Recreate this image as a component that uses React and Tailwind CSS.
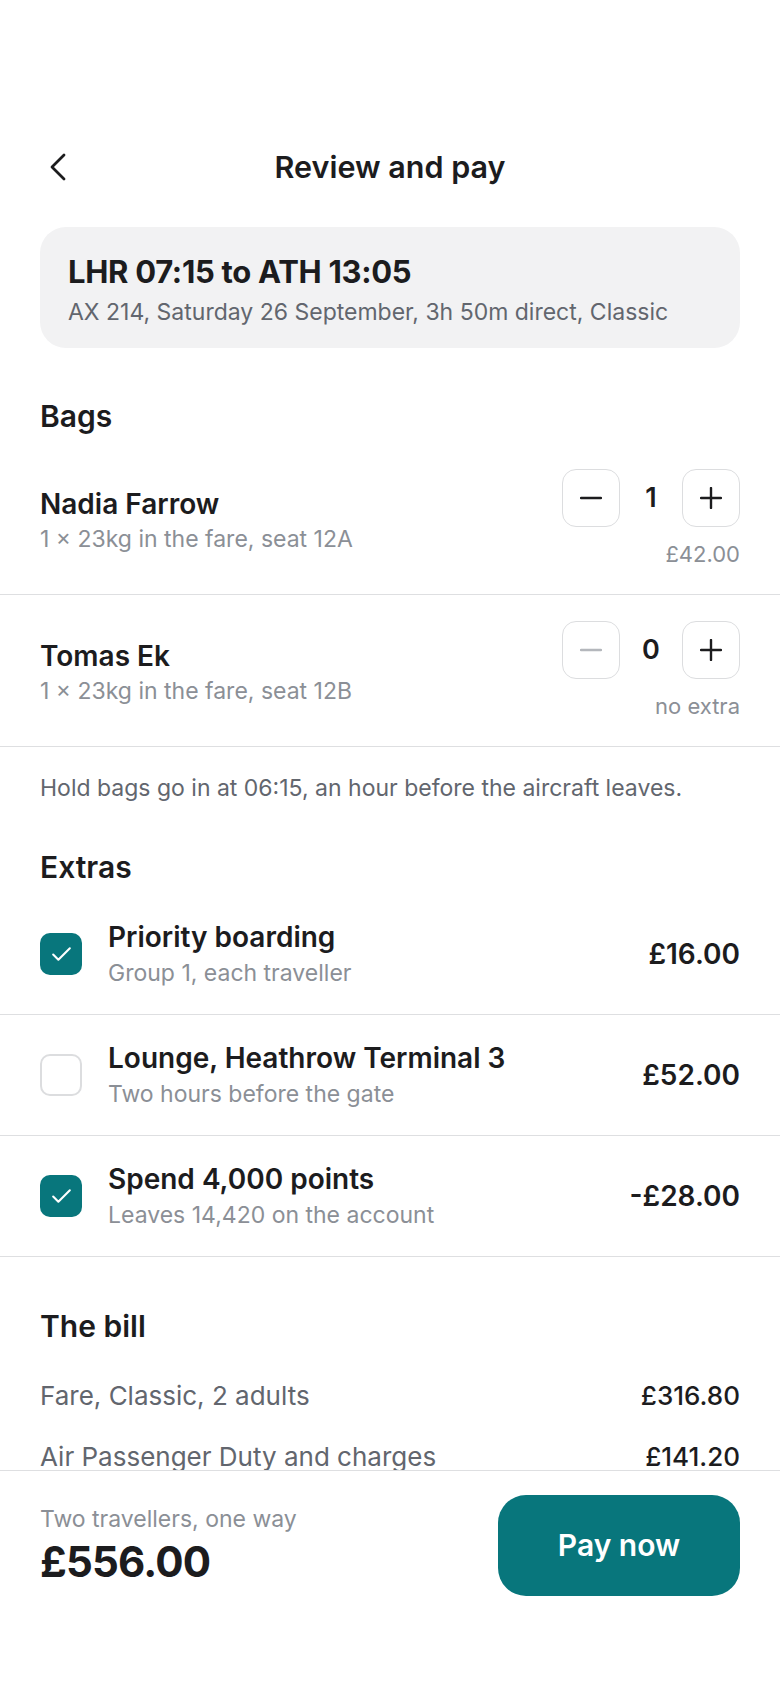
import { Check } from 'lucide-react';

const bags = [
  { name: 'Nadia Farrow', note: '1 × 23kg in the fare, seat 12A', count: 1, price: '£42.00' },
  { name: 'Tomas Ek', note: '1 × 23kg in the fare, seat 12B', count: 0, price: 'no extra' },
];

const extras = [
  { name: 'Priority boarding', note: 'Group 1, each traveller', price: '£16.00', on: true },
  { name: 'Lounge, Heathrow Terminal 3', note: 'Two hours before the gate', price: '£52.00', on: false },
  { name: 'Spend 4,000 points', note: 'Leaves 14,420 on the account', price: '-£28.00', on: true },
];

function Minus({ muted }) {
  return (
    <svg width="22" height="22" viewBox="0 0 22 22" fill="none">
      <line x1="1" y1="11" x2="21" y2="11" stroke={muted ? '#b4b7bc' : '#1c1c1e'} strokeWidth="2.4" strokeLinecap="round" />
    </svg>
  );
}

function Plus() {
  return (
    <svg width="22" height="22" viewBox="0 0 22 22" fill="none">
      <line x1="1" y1="11" x2="21" y2="11" stroke="#1c1c1e" strokeWidth="2.4" strokeLinecap="round" />
      <line x1="11" y1="1" x2="11" y2="21" stroke="#1c1c1e" strokeWidth="2.4" strokeLinecap="round" />
    </svg>
  );
}

export default function App() {
  return (
    <div className="h-[1688px] w-[780px] bg-white flex flex-col font-['Inter',sans-serif] text-[#1c1c1e]">
      <div className="flex-1 overflow-hidden">
        {/* header */}
        <div className="mt-[139px] h-[56px] px-10 flex items-center relative">
          <svg width="22" height="30" viewBox="0 0 22 30" fill="none" className="ml-[8px]">
            <path d="M16 3 L4 15 L16 27" stroke="#1c1c1e" strokeWidth="2.8" strokeLinecap="round" strokeLinejoin="round" />
          </svg>
          <h1 className="absolute inset-x-0 text-center text-[30.5px] font-semibold leading-[56px]">Review and pay</h1>
        </div>

        {/* flight card */}
        <div className="mx-10 mt-[32px] rounded-[26px] bg-[#f2f2f3] px-[28px] pt-[27px] pb-[21px]">
          <div className="text-[31px] font-bold leading-[36px] tracking-[-0.3px]">LHR 07:15 to ATH 13:05</div>
          <div className="mt-[7px] text-[23px] leading-[30px] text-[#62666e]">AX 214, Saturday 26 September, 3h 50m direct, Classic</div>
        </div>

        {/* bags */}
        <h2 className="px-10 mt-[50px] mb-[9px] text-[30px] font-semibold leading-[36px]">Bags</h2>
        <div>
          {bags.map((b) => (
            <div key={b.name} className="px-10 py-[26px] border-b border-[#dedfe1] flex items-center justify-between">
              <div className="flex flex-col gap-[3px] pt-[4px]">
                <span className="text-[28px] font-semibold leading-[34px]">{b.name}</span>
                <span className="text-[23px] leading-[30px] text-[#8b8f96]">{b.note}</span>
              </div>
              <div className="flex flex-col items-end gap-[13px]">
                <div className="flex items-center gap-[11px]">
                  <button className="w-[58px] h-[58px] rounded-[14px] border border-[#dcdddf] flex items-center justify-center">
                    <Minus muted={b.count === 0} />
                  </button>
                  <span className="w-[40px] text-center text-[27px] font-semibold">{b.count}</span>
                  <button className="w-[58px] h-[58px] rounded-[14px] border border-[#dcdddf] flex items-center justify-center">
                    <Plus />
                  </button>
                </div>
                <span className="text-[22px] leading-[28px] text-[#8b8f96]">{b.price}</span>
              </div>
            </div>
          ))}
        </div>
        <p className="px-10 pt-[26px] text-[23px] leading-[30px] text-[#62666e]">
          Hold bags go in at 06:15, an hour before the aircraft leaves.
        </p>

        {/* extras */}
        <h2 className="px-10 mt-[46px] mb-[9px] text-[30px] font-semibold leading-[36px]">Extras</h2>
        <div>
          {extras.map((e) => (
            <div key={e.name} className="px-10 py-[26px] border-b border-[#dedfe1] flex items-center">
              {e.on ? (
                <div className="w-[42px] h-[42px] rounded-[10px] bg-[#08767c] flex items-center justify-center">
                  <Check size={25} color="#fff" strokeWidth={2} />
                </div>
              ) : (
                <div className="w-[42px] h-[42px] rounded-[10px] border-2 border-[#dcdddf]" />
              )}
              <div className="ml-[26px] flex-1 flex flex-col gap-[4px]">
                <span className="text-[28px] font-semibold leading-[34px]">{e.name}</span>
                <span className="text-[23px] leading-[30px] text-[#8b8f96]">{e.note}</span>
              </div>
              <span className="text-[28px] font-semibold">{e.price}</span>
            </div>
          ))}
        </div>

        {/* bill */}
        <h2 className="px-10 mt-[51px] text-[30px] font-semibold leading-[36px]">The bill</h2>
        <div className="px-10 mt-[36px] flex flex-col gap-[29px]">
          <div className="flex justify-between text-[26px] leading-[32px]">
            <span className="text-[#62666e]">Fare, Classic, 2 adults</span>
            <span className="font-medium">£316.80</span>
          </div>
          <div className="flex justify-between text-[26px] leading-[32px]">
            <span className="text-[#62666e]">Air Passenger Duty and charges</span>
            <span className="font-medium">£141.20</span>
          </div>
        </div>
      </div>

      {/* footer */}
      <div className="shrink-0 border-t border-[#dedfe1] bg-white px-10 pt-[24px] pb-[92px] flex items-center justify-between">
        <div className="flex flex-col">
          <span className="text-[23px] leading-[30px] text-[#8b8f96]">Two travellers, one way</span>
          <span className="mt-[2px] text-[42px] font-bold leading-[52px] tracking-[-0.8px]">£556.00</span>
        </div>
        <button className="w-[242px] h-[101px] rounded-[28px] bg-[#08767c] text-white text-[30px] font-semibold">
          Pay now
        </button>
      </div>
    </div>
  );
}
